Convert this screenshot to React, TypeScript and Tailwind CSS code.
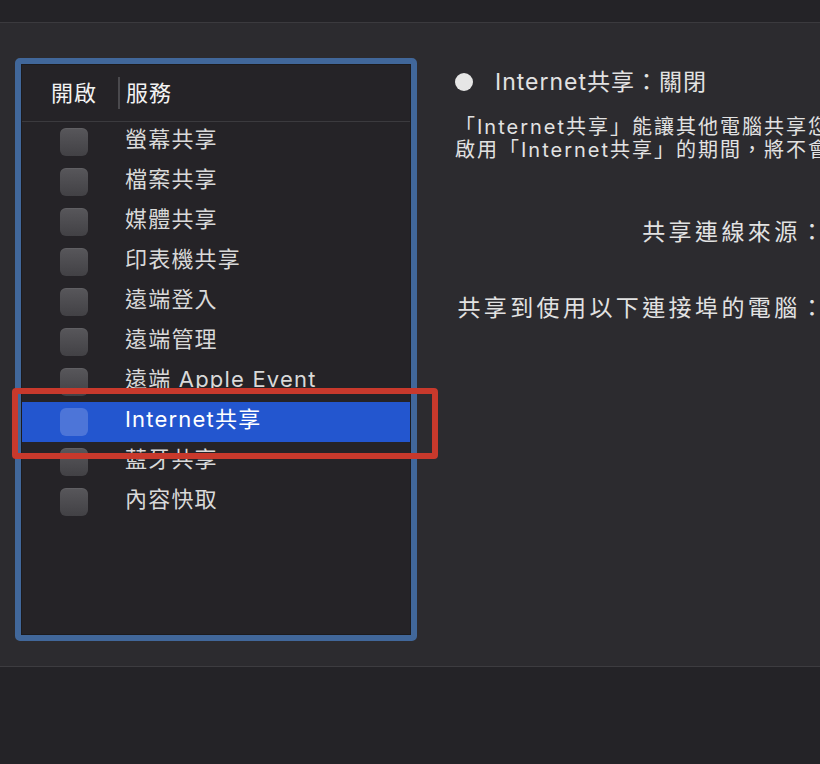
import clsx from 'clsx';

const services = [
    '螢幕共享',
    '檔案共享',
    '媒體共享',
    '印表機共享',
    '遠端登入',
    '遠端管理',
    '遠端 Apple Event',
    'Internet共享',
    '藍牙共享',
    '內容快取',
];

const selected = 'Internet共享';

function Checkbox({ active }: { active: boolean }) {
    return (
        <div
            className={clsx(
                'w-[28px] h-[28px] rounded-[6px] shrink-0',
                active
                    ? 'bg-[#4d75d8]'
                    : 'bg-linear-to-b from-[#58575b] to-[#424145] shadow-[inset_0_1px_0_rgba(255,255,255,0.06)]'
            )}
        />
    );
}

export default function App() {
    return (
        <div className="relative w-[820px] h-[764px] overflow-hidden flex flex-col bg-[#2c2b2f] font-['Inter','Noto_Sans_CJK_TC',sans-serif]">
            {/* window top strip */}
            <div className="h-[23px] shrink-0 bg-[#242327] border-b border-[#3b3a3e]" />

            <div className="h-[643px] shrink-0 flex">
                {/* services list */}
                <div className="pl-[15px] pt-[35px] shrink-0">
                    <div className="w-[402px] h-[583px] rounded-[5px] border-[6px] border-[#41679a]">
                        <div className="h-full border border-[#1c1b1e] bg-[#252327] flex flex-col">
                            <div className="h-[57px] shrink-0 flex items-center border-b border-[#3b3a3e] text-[22px] text-[#f2f2f2] tracking-[1px]">
                                <span className="pl-[29px]">開啟</span>
                                <div className="ml-[21px] w-[2px] h-[32px] bg-[#4a494d]" />
                                <span className="ml-[6px]">服務</span>
                            </div>
                            {services.map((name) => {
                                const active = name === selected;
                                return (
                                    <div
                                        key={name}
                                        className={clsx(
                                            'h-[40px] shrink-0 flex items-center pl-[38px]',
                                            active && 'bg-[#2356cf]'
                                        )}
                                    >
                                        <Checkbox active={active} />
                                        <span
                                            className={clsx(
                                                'ml-[37px] pb-[5px] text-[22px] tracking-[1.2px] whitespace-nowrap',
                                                active ? 'text-white' : 'text-[#d9d9d9]'
                                            )}
                                        >
                                            {name}
                                        </span>
                                    </div>
                                );
                            })}
                        </div>
                    </div>
                </div>

                {/* detail pane */}
                <div className="flex-1 min-w-0 pl-[38px] pt-[45px] overflow-hidden text-[#e2e2e2]">
                    <div className="flex items-center h-[28px]">
                        <div className="w-[18px] h-[18px] rounded-full bg-[#e6e6e6] shrink-0" />
                        <span className="ml-[22px] text-[23px] tracking-[1px] whitespace-nowrap">
                            Internet共享：關閉
                        </span>
                    </div>
                    <div className="mt-[20px] text-[20px] leading-[23px] tracking-[2px] whitespace-nowrap">
                        <p>「Internet共享」能讓其他電腦共享您的 Internet 連線。</p>
                        <p>啟用「Internet共享」的期間，將不會進入睡眠。</p>
                    </div>
                    <div className="w-[372px] mt-[53px] text-right text-[23px] tracking-[3.4px] whitespace-nowrap">
                        <p className="h-[30px]">共享連線來源：</p>
                        <p className="mt-[46px] h-[30px]">共享到使用以下連接埠的電腦：</p>
                    </div>
                </div>
            </div>

            <div className="flex-1 bg-[#242327] border-t border-[#3d3c40]" />

            {/* red annotation box */}
            <div className="absolute left-[12px] top-[388px] w-[426px] h-[71px] rounded-[4px] border-[6px] border-[#c8392c]" />
        </div>
    );
}
